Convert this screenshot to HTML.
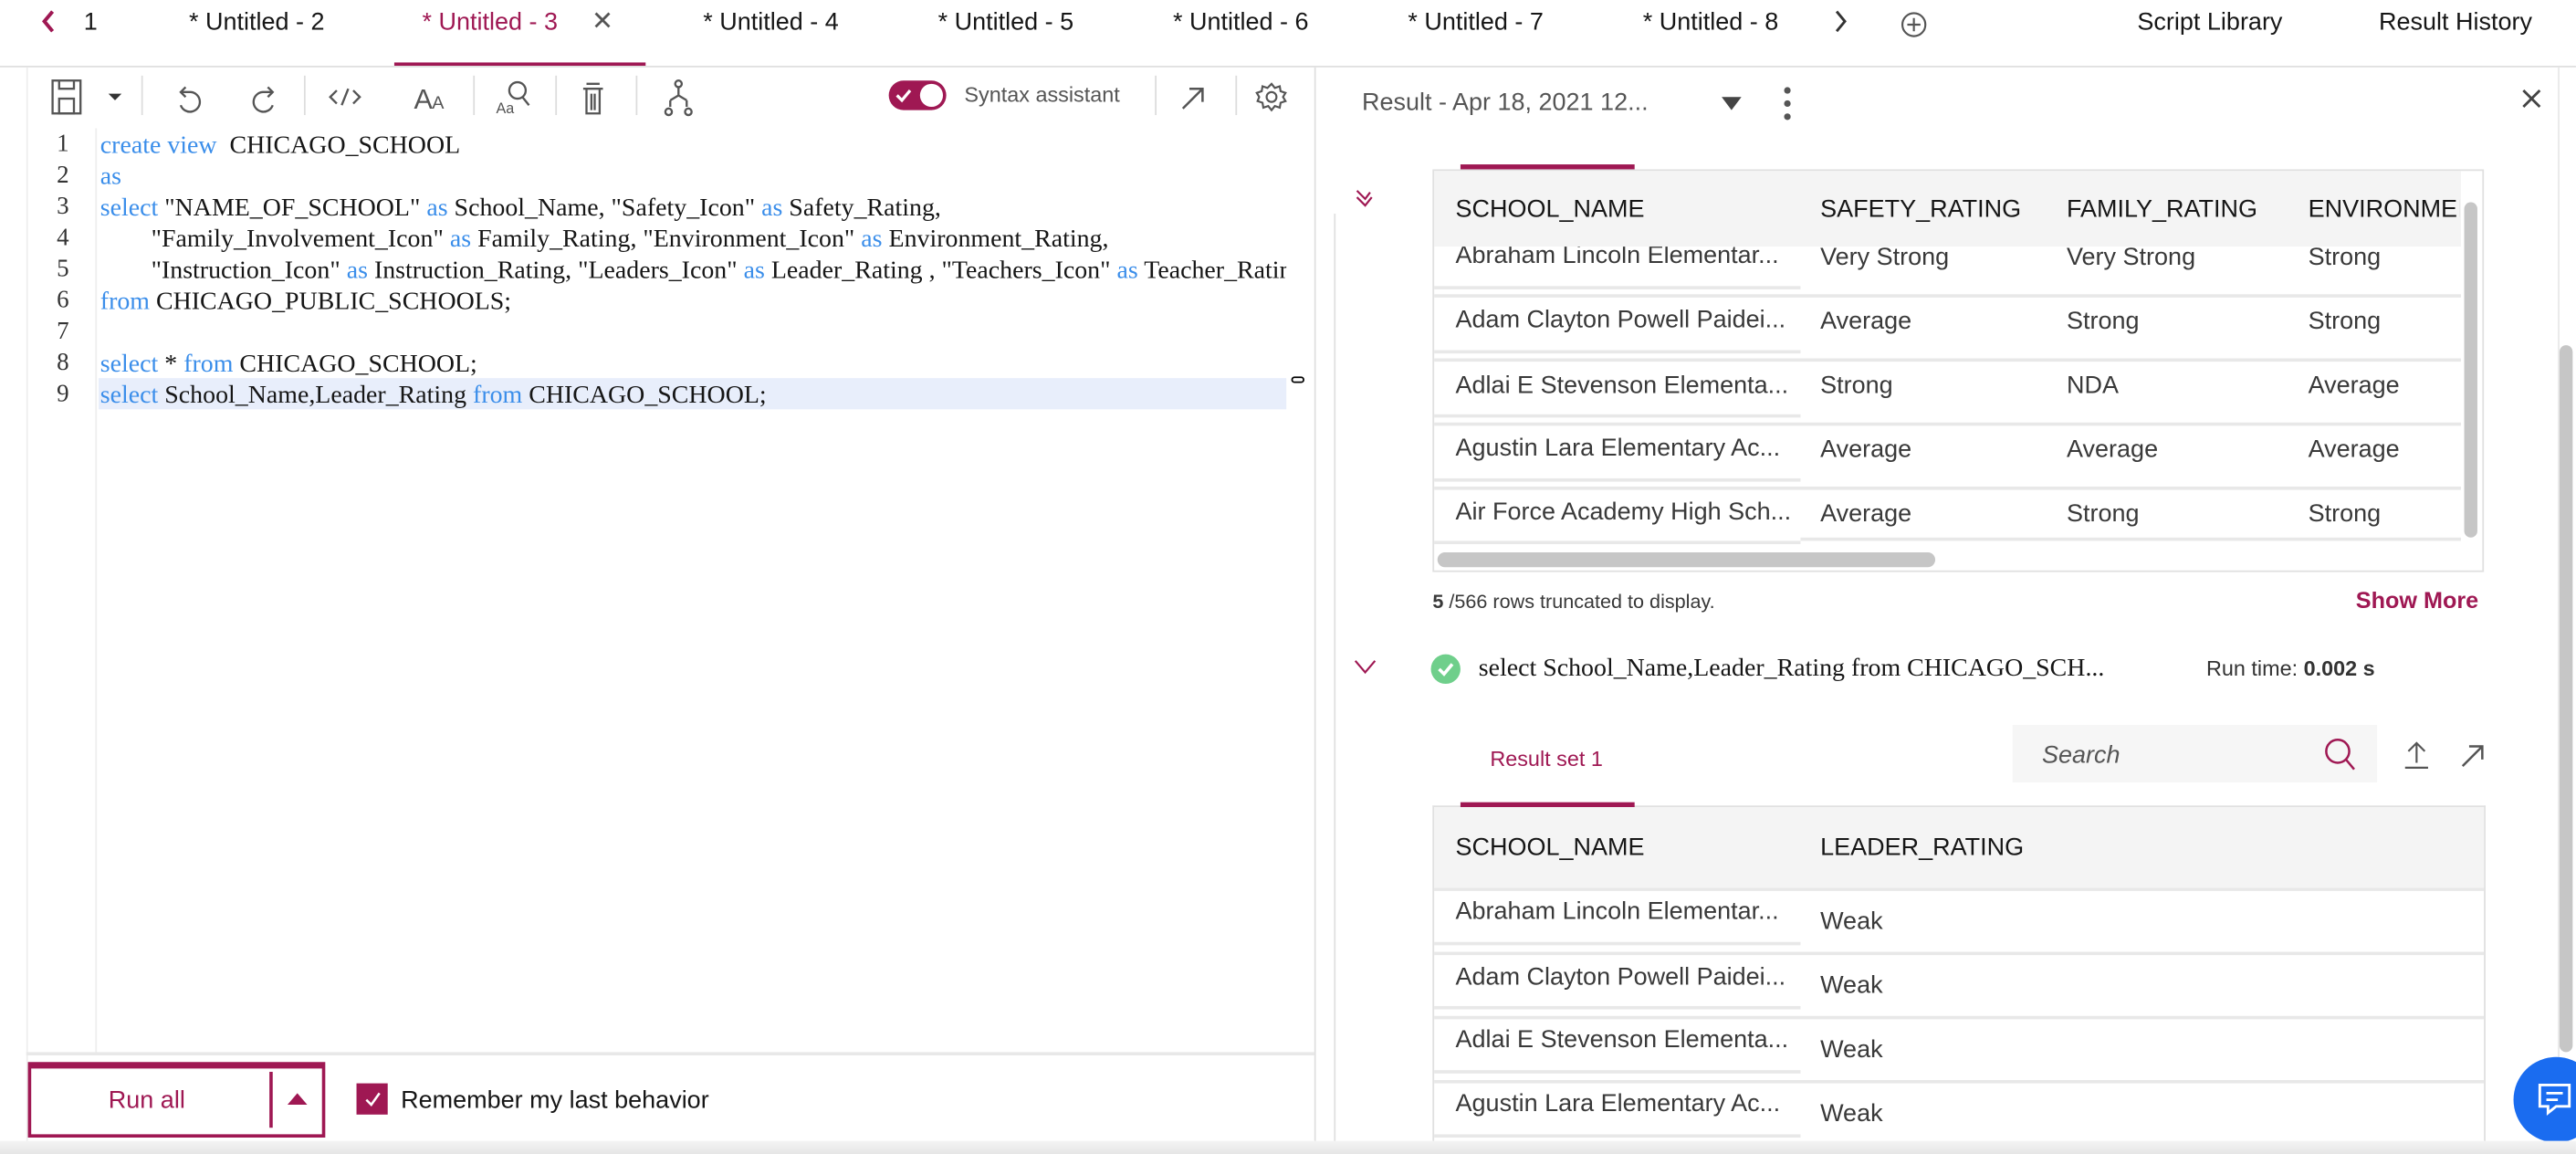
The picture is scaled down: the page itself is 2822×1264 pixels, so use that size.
<!DOCTYPE html>
<html><head><meta charset="utf-8">
<style>
html,body{margin:0;padding:0;width:2822px;height:1264px;overflow:hidden;background:#fff}
#w{position:absolute;left:0;top:0;width:1568px;height:702px;transform:scale(1.7997,1.8006);transform-origin:0 0;font-family:"Liberation Sans",sans-serif;color:#161616}
.a{position:absolute;white-space:nowrap}
.tab{position:absolute;top:5px;font-size:15px;color:#161616}
.code{position:absolute;left:61px;font-family:"Liberation Serif",serif;font-size:15.5px;color:#161616;white-space:pre}
.k{color:#3b8eea}
.ln{position:absolute;left:30px;width:12px;text-align:right;font-family:"Liberation Serif",serif;font-size:15px;color:#333}
.sep{position:absolute;top:46px;width:1px;height:24px;background:#ddd}
.cell{position:absolute;font-size:15px;color:#393939;white-space:nowrap}
.hd{position:absolute;font-size:15px;color:#161616;white-space:nowrap}
.rl{position:absolute;height:2px;background:#e8e8e8}
</style></head><body><div id="w">
<!-- tabs -->
<div class="a" style="left:0;top:40px;width:1568px;height:1px;background:#e0e0e0"></div>
<svg class="a" style="left:24px;top:5px" width="12" height="16" viewBox="0 0 12 16"><path d="M8 2 L3 8 L8 14" fill="none" stroke="#9f1853" stroke-width="2.2"/></svg>
<div class="tab" style="left:51px">1</div>
<div class="tab" style="left:115px">* Untitled - 2</div>
<div class="tab" style="left:257px;color:#9f1853">* Untitled - 3</div>
<div class="tab" style="left:360px;font-size:16px;top:3px;color:#555">✕</div>
<div class="a" style="left:240px;top:38px;width:153px;height:2px;background:#9f1853"></div>
<div class="tab" style="left:428px">* Untitled - 4</div>
<div class="tab" style="left:571px">* Untitled - 5</div>
<div class="tab" style="left:714px">* Untitled - 6</div>
<div class="tab" style="left:857px">* Untitled - 7</div>
<div class="tab" style="left:1000px">* Untitled - 8</div>
<svg class="a" style="left:1114px;top:5px" width="12" height="16" viewBox="0 0 12 16"><path d="M4 2 L9 8 L4 14" fill="none" stroke="#333" stroke-width="1.6"/></svg>
<svg class="a" style="left:1157px;top:7px" width="16" height="16" viewBox="0 0 16 16"><circle cx="8" cy="8" r="7" fill="none" stroke="#555" stroke-width="1.2"/><path d="M8 4v8M4 8h8" stroke="#555" stroke-width="1.2"/></svg>
<div class="tab" style="left:1301px">Script Library</div>
<div class="tab" style="left:1448px">Result History</div>

<!-- left panel -->
<div class="a" style="left:16px;top:41px;width:1px;height:661px;background:#eee"></div>
<svg class="a" style="left:30px;top:47px" width="400" height="24" viewBox="0 0 400 24" fill="none" stroke="#555" stroke-width="1.3">
<rect x="2" y="2" width="17" height="20"/><rect x="6" y="13" width="9" height="9"/><path d="M6 2v5h9V2"/>
<path d="M36 10l4 4 4-4z" fill="#333" stroke="none"/>
<path d="M83 6l-3 3 3 3"/><path d="M80 9h6a6 6 0 1 1-6 8"/>
<path d="M133 6l3 3-3 3"/><path d="M136 9h-6a6 6 0 1 0 6 8"/>
<path d="M175 8l-4 4 4 4M185 8l4 4-4 4M182 7l-4 10"/>
<text x="222" y="19" font-family="Liberation Sans" font-size="17" fill="#555" stroke="none">A</text><text x="233" y="19" font-family="Liberation Sans" font-size="11" fill="#555" stroke="none">A</text>
<circle cx="285" cy="8" r="5"/><path d="M288 12l4 5"/><text x="272" y="22" font-family="Liberation Sans" font-size="9" fill="#555" stroke="none">Aa</text>
<path d="M327 4h8M325 7h12M327 7v15h8V7M330 10v10M332 10v10"/>
<circle cx="383" cy="4" r="2"/><path d="M383 6v5M378 14l5-3 5 3M378 14v4M388 14v4"/><circle cx="377" cy="21" r="2"/><circle cx="389" cy="21" r="2"/>
</svg>
<div class="sep" style="left:86px"></div><div class="sep" style="left:185px"></div><div class="sep" style="left:288px"></div><div class="sep" style="left:338px"></div><div class="sep" style="left:387px"></div>
<div class="a" style="left:541px;top:49px;width:35px;height:18px;border-radius:9px;background:#9f1853"></div>
<div class="a" style="left:560px;top:51px;width:14px;height:14px;border-radius:7px;background:#fff"></div>
<svg class="a" style="left:544px;top:52px" width="12" height="12" viewBox="0 0 12 12"><path d="M2 6l3 3 5-6" fill="none" stroke="#fff" stroke-width="1.8"/></svg>
<div class="a" style="left:587px;top:50px;font-size:13px;color:#555">Syntax assistant</div>
<div class="sep" style="left:703px"></div><div class="sep" style="left:752px"></div>
<svg class="a" style="left:717px;top:50px" width="18" height="18" viewBox="0 0 18 18"><path d="M3 16L15 4M7 4h8v8" fill="none" stroke="#555" stroke-width="1.4"/></svg>
<svg class="a" style="left:764px;top:49px" width="20" height="20" viewBox="0 0 20 20"><circle cx="10" cy="10" r="3" fill="none" stroke="#555" stroke-width="1.2"/><path d="M10 2l2 2.5 3-1 .5 3 3 1-1.5 2.5 1.5 2.5-3 1-.5 3-3-1-2 2.5-2-2.5-3 1-.5-3-3-1L2.5 10 1 7.5l3-1 .5-3 3 1z" fill="none" stroke="#555" stroke-width="1.2"/></svg>

<div class="a" style="left:58px;top:78px;width:1px;height:563px;background:#eee"></div>
<div class="a" style="left:60px;top:230px;width:723px;height:19px;background:#e8eefb"></div>
<div class="a" style="left:786px;top:229px;width:8px;height:4px;border:1.5px solid #000;border-radius:2px;box-sizing:border-box"></div>
<div class="ln" style="top:80px">1</div><div class="ln" style="top:99px">2</div><div class="ln" style="top:118px">3</div><div class="ln" style="top:137px">4</div><div class="ln" style="top:156px">5</div><div class="ln" style="top:175px">6</div><div class="ln" style="top:194px">7</div><div class="ln" style="top:213px">8</div><div class="ln" style="top:232px">9</div>
<div class="code" style="top:80px"><span class="k">create view</span>  CHICAGO_SCHOOL</div>
<div class="code" style="top:99px"><span class="k">as</span></div>
<div class="code" style="top:118px"><span class="k">select</span> "NAME_OF_SCHOOL" <span class="k">as</span> School_Name, "Safety_Icon" <span class="k">as</span> Safety_Rating,</div>
<div class="code" style="top:137px">        "Family_Involvement_Icon" <span class="k">as</span> Family_Rating, "Environment_Icon" <span class="k">as</span> Environment_Rating,</div>
<div class="code" style="top:156px;width:722px;overflow:hidden">        "Instruction_Icon" <span class="k">as</span> Instruction_Rating, "Leaders_Icon" <span class="k">as</span> Leader_Rating , "Teachers_Icon" <span class="k">as</span> Teacher_Rating</div>
<div class="code" style="top:175px"><span class="k">from</span> CHICAGO_PUBLIC_SCHOOLS;</div>
<div class="code" style="top:213px"><span class="k">select</span> * <span class="k">from</span> CHICAGO_SCHOOL;</div>
<div class="code" style="top:232px"><span class="k">select</span> School_Name,Leader_Rating <span class="k">from</span> CHICAGO_SCHOOL;</div>

<div class="a" style="left:16px;top:640px;width:784px;height:2px;background:#e8e8e8"></div>
<div class="a" style="left:17px;top:646px;width:181px;height:46px;border:2px solid #9f1853;border-top-width:4px;box-sizing:border-box"></div>
<div class="a" style="left:66px;top:661px;font-size:15px;color:#9f1853">Run all</div>
<div class="a" style="left:164px;top:652px;width:2px;height:34px;background:#9f1853"></div>
<svg class="a" style="left:174px;top:663px" width="14" height="10"><path d="M1 9L7 2l6 7z" fill="#9f1853"/></svg>
<div class="a" style="left:217px;top:659px;width:19px;height:19px;background:#9f1853"></div>
<svg class="a" style="left:220px;top:662px" width="14" height="14"><path d="M3 7l3 3 5-7" fill="none" stroke="#fff" stroke-width="1.4"/></svg>
<div class="a" style="left:244px;top:661px;font-size:15px;color:#161616">Remember my last behavior</div>

<div class="a" style="left:800px;top:41px;width:1px;height:661px;background:#e0e0e0"></div>
<div class="a" style="left:812px;top:130px;width:1px;height:572px;background:#e0e0e0"></div>

<!-- right -->
<div class="a" style="left:829px;top:54px;font-size:15px;color:#555">Result - Apr 18, 2021 12...</div>
<svg class="a" style="left:1047px;top:58px" width="14" height="10"><path d="M1 1h12L7 9z" fill="#444"/></svg>
<div class="a" style="left:1086px;top:53px;width:4px;height:4px;border-radius:2px;background:#555"></div>
<div class="a" style="left:1086px;top:61px;width:4px;height:4px;border-radius:2px;background:#555"></div>
<div class="a" style="left:1086px;top:69px;width:4px;height:4px;border-radius:2px;background:#555"></div>
<svg class="a" style="left:1534px;top:53px" width="14" height="14"><path d="M2 2l10 10M12 2L2 12" stroke="#444" stroke-width="1.6"/></svg>

<svg class="a" style="left:823px;top:114px" width="16" height="16"><path d="M3 2l5 5 3-4M3 6l5 5 4-5" fill="none" stroke="#9f1853" stroke-width="1.2"/></svg>
<div class="a" style="left:872px;top:103px;width:640px;height:245px;border:1px solid #e0e0e0;box-sizing:border-box"></div>
<div class="a" style="left:889px;top:100px;width:106px;height:3px;background:#9f1853"></div>
<div class="a" style="left:873px;top:104px;width:625px;height:46px;background:#f4f4f4"></div>
<div class="hd" style="left:886px;top:119px">SCHOOL_NAME</div>
<div class="hd" style="left:1108px;top:119px">SAFETY_RATING</div>
<div class="hd" style="left:1258px;top:119px">FAMILY_RATING</div>
<div class="hd" style="left:1405px;top:119px;width:92px;overflow:hidden">ENVIRONMENT_RATING</div>
<div class="a" style="left:873px;top:150px;width:625px;height:18px;overflow:hidden">
<div class="cell" style="left:13px;top:-3px">Abraham Lincoln Elementar...</div><div class="cell" style="left:235px;top:-2px">Very Strong</div><div class="cell" style="left:385px;top:-2px">Very Strong</div><div class="cell" style="left:532px;top:-2px">Strong</div></div>
<div class="rl" style="left:873px;top:174px;width:223px"></div><div class="rl" style="left:873px;top:179px;width:625px"></div>
<div class="cell" style="left:886px;top:186px">Adam Clayton Powell Paidei...</div><div class="cell" style="left:1108px;top:187px">Average</div><div class="cell" style="left:1258px;top:187px">Strong</div><div class="cell" style="left:1405px;top:187px">Strong</div>
<div class="rl" style="left:873px;top:213px;width:223px"></div><div class="rl" style="left:873px;top:218px;width:625px"></div>
<div class="cell" style="left:886px;top:226px">Adlai E Stevenson Elementa...</div><div class="cell" style="left:1108px;top:226px">Strong</div><div class="cell" style="left:1258px;top:226px">NDA</div><div class="cell" style="left:1405px;top:226px">Average</div>
<div class="rl" style="left:873px;top:252px;width:223px"></div><div class="rl" style="left:873px;top:257px;width:625px"></div>
<div class="cell" style="left:886px;top:264px">Agustin Lara Elementary Ac...</div><div class="cell" style="left:1108px;top:265px">Average</div><div class="cell" style="left:1258px;top:265px">Average</div><div class="cell" style="left:1405px;top:265px">Average</div>
<div class="rl" style="left:873px;top:291px;width:223px"></div><div class="rl" style="left:873px;top:296px;width:625px"></div>
<div class="cell" style="left:886px;top:303px">Air Force Academy High Sch...</div><div class="cell" style="left:1108px;top:304px">Average</div><div class="cell" style="left:1258px;top:304px">Strong</div><div class="cell" style="left:1405px;top:304px">Strong</div>
<div class="rl" style="left:873px;top:329px;width:223px"></div><div class="rl" style="left:1096px;top:327px;width:402px"></div>
<div class="a" style="left:1500px;top:123px;width:8px;height:204px;border-radius:4px;background:#c6c6c6"></div>
<div class="a" style="left:875px;top:336px;width:303px;height:9px;border-radius:5px;background:#c6c6c6"></div>
<div class="a" style="left:872px;top:359px;font-size:12px;color:#393939"><b>5</b> /566 rows truncated to display.</div>
<div class="a" style="left:1434px;top:357px;font-size:14px;font-weight:bold;color:#9f1853">Show More</div>

<svg class="a" style="left:824px;top:401px" width="14" height="10"><path d="M1 1l6 7 6-7" fill="none" stroke="#9f1853" stroke-width="1.2"/></svg>
<div class="a" style="left:871px;top:398px;width:18px;height:18px;border-radius:9px;background:#6fcf8b"></div>
<svg class="a" style="left:874px;top:401px" width="12" height="12"><path d="M2 6l3 3 5-6" fill="none" stroke="#fff" stroke-width="2"/></svg>
<div class="a" style="left:900px;top:398px;font-family:'Liberation Serif',serif;font-size:15.5px">select School_Name,Leader_Rating from CHICAGO_SCH...</div>
<div class="a" style="left:1343px;top:399px;font-size:13px;color:#333">Run time: <b>0.002 s</b></div>

<div class="a" style="left:907px;top:454px;font-size:13px;color:#9f1853">Result set 1</div>
<div class="a" style="left:1225px;top:441px;width:222px;height:35px;background:#f6f6f6"></div>
<div class="a" style="left:1243px;top:451px;font-size:15px;font-style:italic;color:#555">Search</div>
<svg class="a" style="left:1413px;top:448px" width="22" height="22"><circle cx="10" cy="9" r="7" fill="none" stroke="#9f1853" stroke-width="1.4"/><path d="M15 14l5 6" stroke="#9f1853" stroke-width="1.4"/></svg>
<svg class="a" style="left:1462px;top:449px" width="18" height="20"><path d="M9 15V3M4 8l5-5 5 5M2 18h14" fill="none" stroke="#555" stroke-width="1.2"/></svg>
<svg class="a" style="left:1496px;top:450px" width="18" height="18"><path d="M3 16L15 4M7 4h8v8" fill="none" stroke="#555" stroke-width="1.4"/></svg>

<div class="a" style="left:872px;top:490px;width:641px;height:212px;border:1px solid #e0e0e0;border-bottom:none;box-sizing:border-box"></div>
<div class="a" style="left:889px;top:488px;width:106px;height:3px;background:#9f1853"></div>
<div class="a" style="left:873px;top:491px;width:639px;height:49px;background:#f4f4f4"></div>
<div class="hd" style="left:886px;top:507px">SCHOOL_NAME</div>
<div class="hd" style="left:1108px;top:507px">LEADER_RATING</div>
<div class="rl" style="left:873px;top:540px;width:639px"></div>
<div class="cell" style="left:886px;top:546px">Abraham Lincoln Elementar...</div><div class="cell" style="left:1108px;top:552px">Weak</div>
<div class="rl" style="left:873px;top:573px;width:223px"></div><div class="rl" style="left:873px;top:579px;width:639px"></div>
<div class="cell" style="left:886px;top:586px">Adam Clayton Powell Paidei...</div><div class="cell" style="left:1108px;top:591px">Weak</div>
<div class="rl" style="left:873px;top:612px;width:223px"></div><div class="rl" style="left:873px;top:618px;width:639px"></div>
<div class="cell" style="left:886px;top:624px">Adlai E Stevenson Elementa...</div><div class="cell" style="left:1108px;top:630px">Weak</div>
<div class="rl" style="left:873px;top:651px;width:223px"></div><div class="rl" style="left:873px;top:657px;width:639px"></div>
<div class="cell" style="left:886px;top:663px">Agustin Lara Elementary Ac...</div><div class="cell" style="left:1108px;top:669px">Weak</div>
<div class="rl" style="left:873px;top:690px;width:223px"></div>

<div class="a" style="left:1557px;top:41px;width:1px;height:661px;background:#e8e8e8"></div>
<div class="a" style="left:1558px;top:210px;width:8px;height:430px;border-radius:4px;background:#c6c6c6"></div>
<div class="a" style="left:1530px;top:643px;width:52px;height:52px;border-radius:26px;background:#1a6cf0"></div>
<svg class="a" style="left:1543px;top:657px" width="24" height="24"><path d="M3 3h18v13h-8l-5 4v-4H3z" fill="none" stroke="#fff" stroke-width="1.6"/><path d="M7 8h10M7 12h7" stroke="#fff" stroke-width="1.5"/></svg>
<div class="a" style="left:0;top:694px;width:1568px;height:8px;background:linear-gradient(#f4f4f4,#e6e6e6)"></div>
</div></body></html>
